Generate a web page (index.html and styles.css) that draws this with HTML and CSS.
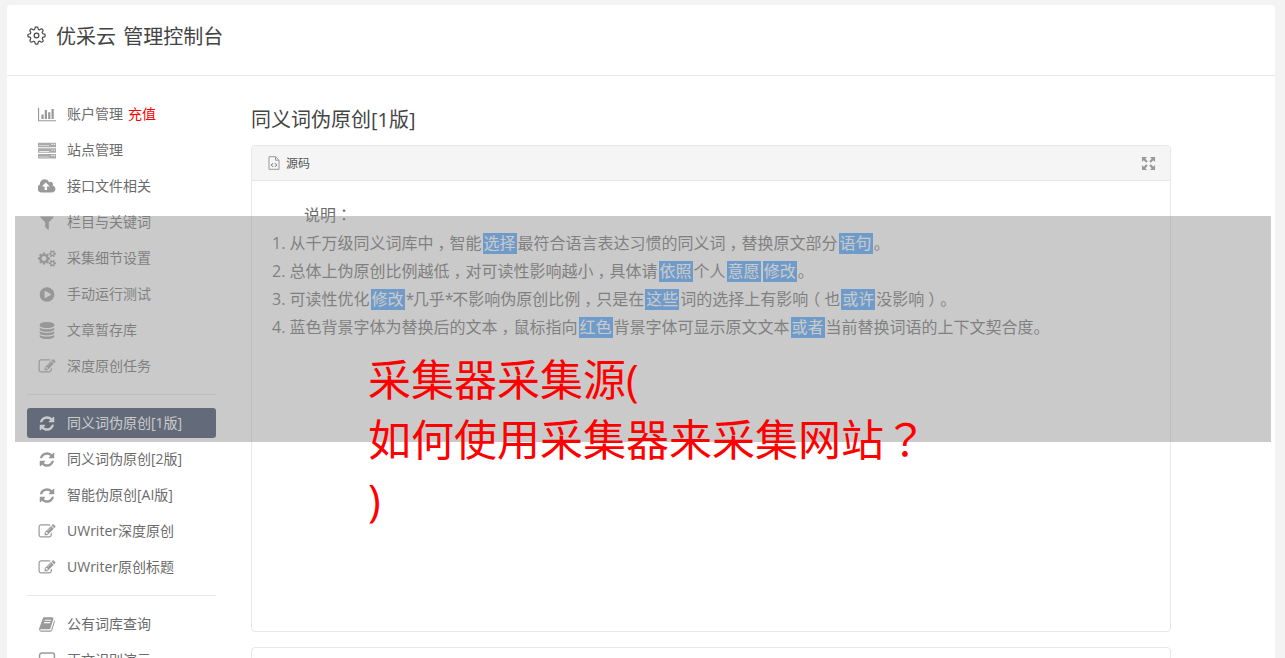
FILE: index.html
```html
<!DOCTYPE html>
<html lang="en">

<head>
	<meta charset="UTF-8">
	<title>优采云 管理控制台</title>
	<link rel="stylesheet" href="styles.css">
</head>

<body>
	<svg class="icon-defs" xmlns="http://www.w3.org/2000/svg">
		<symbol id="i-chart" viewBox="-128 128 2048 1536"><path d="M512 896v512h-256v-512h256zm384-512v1024h-256v-1024h256zm1024 1152v128h-2048v-1536h128v1408h1920zm-640-896v768h-256v-768h256zm384-384v1152h-256v-1152h256z"/></symbol>
		<symbol id="i-server" viewBox="0 0 16 14"><path fill="#aaaaaa" d="M0 0h16v4H0zM0 5h16v4H0zM0 10h16v4H0z"/><path fill="#fff" d="M12 1h1v1h-1zM14 1h1v1h-1zM12 6h1v1h-1zM14 6h1v1h-1zM12 11h1v1h-1zM14 11h1v1h-1zM1 2.500h9v.6H1zM1 7.500h9v.6H1zM1 12.500h9v.6H1z"/></symbol>
		<symbol id="i-cloud" viewBox="0 0 1920 1792"><path d="M1216 864q0-14-9-23l-352-352q-9-9-23-9t-23 9l-351 351q-10 12-10 24 0 14 9 23t23 9h224v352q0 13 9.500 22.500t22.500 9.500h192q13 0 22.500-9.500t9.500-22.500v-352h224q13 0 22.500-9.500t9.500-22.500zm640 288q0 159-112.500 271.500t-271.500 112.500h-1088q-185 0-316.500-131.500t-131.500-316.500q0-130 70-240t188-165q-2-30-2-43 0-212 150-362t362-150q156 0 285.500 87t188.500 231q71-62 166-62 106 0 181 75t75 181q0 76-41 138 130 31 213.500 135.500t83.500 238.500z"/></symbol>
		<symbol id="i-filter" viewBox="0 0 1792 1792"><path d="M1595 295q17 41-14 70l-493 493v742q0 42-39 59-13 5-25 5-27 0-45-19l-256-256q-19-19-19-45v-486l-493-493q-31-29-14-70 17-39 59-39h1280q42 0 59 39z"/></symbol>
		<symbol id="i-cogs" viewBox="0 0 1920 1792"><path d="M896 896q0-106-75-181t-181-75-181 75-75 181 75 181 181 75 181-75 75-181zm768 512q0-52-38-90t-90-38-90 38-38 90q0 53 37.500 90.500t90.500 37.500 90.500-37.500 37.500-90.500zm0-1024q0-52-38-90t-90-38-90 38-38 90q0 53 37.500 90.500t90.500 37.500 90.500-37.500 37.500-90.500zm-384 421v185q0 10-7 19.500t-16 10.500l-155 24q-11 35-32 76 34 48 90 115 7 11 7 20 0 12-7 19-23 30-82.500 89.500t-78.500 59.500q-11 0-21-7l-115-90q-37 19-77 31-11 108-23 155-7 24-30 24h-186q-11 0-20-7.500t-10-17.500l-23-153q-34-10-75-31l-118 89q-7 7-20 7-11 0-21-8-144-133-144-160 0-9 7-19 10-14 41-53t47-61q-23-44-35-82l-152-24q-10-1-17-9.500t-7-19.500v-185q0-10 7-19.500t16-10.500l155-24q11-35 32-76-34-48-90-115-7-11-7-20 0-12 7-20 22-30 82-89t79-59q11 0 21 7l115 90q34-18 77-32 11-108 23-154 7-24 30-24h186q11 0 20 7.500t10 17.500l23 153q34 10 75 31l118-89q8-7 20-7 11 0 21 8 144 133 144 160 0 8-7 19-12 16-42 54t-45 60q23 48 34 82l152 23q10 2 17 10.500t7 19.500zm640 533v140q0 16-149 31-12 27-30 52 51 113 51 138 0 4-4 7-122 71-124 71-8 0-46-47t-52-68q-20 2-30 2t-30-2q-14 21-52 68t-46 47q-2 0-124-71-4-3-4-7 0-25 51-138-18-25-30-52-149-15-149-31v-140q0-16 149-31 13-29 30-52-51-113-51-138 0-4 4-7 4-2 35-20t59-34 30-16q8 0 46 46.500t52 67.500q20-2 30-2t30 2q51-71 92-112l6-2q4 0 124 70 4 3 4 7 0 25-51 138 17 23 30 52 149 15 149 31zm0-1024v140q0 16-149 31-12 27-30 52 51 113 51 138 0 4-4 7-122 71-124 71-8 0-46-47t-52-68q-20 2-30 2t-30-2q-14 21-52 68t-46 47q-2 0-124-71-4-3-4-7 0-25 51-138-18-25-30-52-149-15-149-31v-140q0-16 149-31 13-29 30-52-51-113-51-138 0-4 4-7 4-2 35-20t59-34 30-16q8 0 46 46.500t52 67.500q20-2 30-2t30 2q51-71 92-112l6-2q4 0 124 70 4 3 4 7 0 25-51 138 17 23 30 52 149 15 149 31z"/></symbol>
		<symbol id="i-play" viewBox="0 0 1792 1792"><path d="M896 128q209 0 385.500 103t279.500 279.500 103 385.500-103 385.500-279.500 279.500-385.500 103-385.500-103-279.500-279.500-103-385.500 103-385.500 279.500-279.500 385.500-103zm384 823q32-18 32-55t-32-55l-544-320q-31-19-64-1-32 19-32 56v640q0 37 32 56 16 8 32 8 17 0 32-9z"/></symbol>
		<symbol id="i-database" viewBox="0 0 1792 1792"><path d="M896 768q237 0 443-43t325-127v170q0 69-103 128t-280 93.500-385 34.500-385-34.500-280-93.500-103-128v-170q119 84 325 127t443 43zm0 768q237 0 443-43t325-127v170q0 69-103 128t-280 93.500-385 34.500-385-34.500-280-93.500-103-128v-170q119 84 325 127t443 43zm0-384q237 0 443-43t325-127v170q0 69-103 128t-280 93.500-385 34.500-385-34.500-280-93.500-103-128v-170q119 84 325 127t443 43zm0-1152q208 0 385 34.500t280 93.500 103 128v128q0 69-103 128t-280 93.500-385 34.500-385-34.500-280-93.500-103-128v-128q0-69 103-128t280-93.500 385-34.500z"/></symbol>
		<symbol id="i-edit" viewBox="0 0 1792 1792"><path d="M888 1184l116-116-152-152-116 116v56h96v96h56zm440-720q-16-16-33 1l-350 350q-17 17-1 33t33-1l350-350q17-17 1-33zm80 594v190q0 119-84.500 203.500t-203.500 84.500h-832q-119 0-203.500-84.500t-84.500-203.500v-832q0-119 84.500-203.500t203.500-84.500h832q63 0 117 25 15 7 18 23 3 17-9 29l-49 49q-14 14-32 8-23-6-45-6h-832q-66 0-113 47t-47 113v832q0 66 47 113t113 47h832q66 0 113-47t47-113v-126q0-13 9-22l64-64q15-15 35-7t20 29zm-96-738l288 288-672 672h-288v-288zm444 132l-92 92-288-288 92-92q28-28 68-28t68 28l152 152q28 28 28 68t-28 68z"/></symbol>
		<symbol id="i-refresh" viewBox="0 0 1792 1792"><path d="M1639 1056q0 5-1 7-64 268-268 434.500t-478 166.500q-146 0-282.500-55t-243.500-157l-129 129q-19 19-45 19t-45-19-19-45v-448q0-26 19-45t45-19h448q26 0 45 19t19 45-19 45l-137 137q71 66 161 102t187 36q134 0 250-65t186-179q11-17 53-117 8-23 30-23h192q13 0 22.500 9.500t9.500 22.500zm25-800v448q0 26-19 45t-45 19h-448q-26 0-45-19t-19-45 19-45l138-138q-148-137-349-137-134 0-250 65t-186 179q-11 17-53 117-8 23-30 23h-199q-13 0-22.500-9.500t-9.500-22.500v-7q65-268 270-434.500t480-166.500q146 0 284 55.500t245 156.500l130-129q19-19 45-19t45 19 19 45z"/></symbol>
		<symbol id="i-book" viewBox="0 0 1792 1792"><path d="M1703 478q40 57 18 129l-275 906q-19 64-76.500 107.500t-122.500 43.500h-923q-77 0-148.500-53.500t-99.500-131.500q-24-67-2-127 0-4 3-27t4-37q1-8-3-21.500t-3-19.500q2-11 8-21t16.500-23.500 16.500-23.500q23-38 45-91.500t30-91.500q3-10 .5-30t-.5-28q3-11 17-28t17-23q21-36 42-92t25-90q1-9-2.500-32t.5-28q4-13 22-30.500t22-22.500q19-26 42.500-84.500t27.500-96.500q1-8-3-25.500t-2-26.500q2-8 9-18t18-23 17-21q8-12 16.500-30.500t15-35 16-36 19.500-32 26.500-23.500 36-11.500 47.500 5.500l-1 3q38-9 51-9h761q74 0 114 56t18 130l-274 906q-36 119-71.500 153.500t-128.500 34.500h-869q-27 0-38 15-11 16-1 43 24 70 144 70h923q29 0 56-15.500t35-41.500l300-987q7-22 5-57 38 15 59 43zm-1064 2q-4 13 2 22.500t20 9.500h608q13 0 25.500-9.500t16.500-22.500l21-64q4-13-2-22.500t-20-9.500h-608q-13 0-25.500 9.500t-16.500 22.500zm-83 256q-4 13 2 22.500t20 9.500h608q13 0 25.500-9.500t16.500-22.500l21-64q4-13-2-22.500t-20-9.500h-608q-13 0-25.500 9.500t-16.500 22.500z"/></symbol>
		<symbol id="i-square" viewBox="0 0 16 16"><rect x="1" y="1" width="14" height="14" rx="2" fill="none" stroke="currentColor" stroke-width="1.400"/></symbol>
	</svg>

	<div class="card">
		<div class="topbar">
			<svg class="gear" viewBox="0 0 24 24"><circle cx="12" cy="12" r="3"/><path d="M19.4 15a1.65 1.65 0 0 0 .33 1.82l.06.06a2 2 0 0 1 0 2.83 2 2 0 0 1-2.83 0l-.06-.06a1.65 1.65 0 0 0-1.82-.33 1.65 1.65 0 0 0-1 1.51V21a2 2 0 0 1-2 2 2 2 0 0 1-2-2v-.09A1.65 1.65 0 0 0 9 19.4a1.65 1.65 0 0 0-1.82.33l-.06.06a2 2 0 0 1-2.83 0 2 2 0 0 1 0-2.83l.06-.06a1.65 1.65 0 0 0 .33-1.82 1.65 1.65 0 0 0-1.51-1H3a2 2 0 0 1-2-2 2 2 0 0 1 2-2h.09A1.65 1.65 0 0 0 4.600 9a1.65 1.65 0 0 0-.33-1.82l-.06-.06a2 2 0 0 1 0-2.83 2 2 0 0 1 2.83 0l.06.06a1.65 1.65 0 0 0 1.82.33H9a1.65 1.65 0 0 0 1-1.51V3a2 2 0 0 1 2-2 2 2 0 0 1 2 2v.09a1.65 1.65 0 0 0 1 1.51 1.65 1.65 0 0 0 1.82-.33l.06-.06a2 2 0 0 1 2.83 0 2 2 0 0 1 0 2.83l-.06.06a1.65 1.65 0 0 0-.33 1.82V9a1.65 1.65 0 0 0 1.51 1H21a2 2 0 0 1 2 2 2 2 0 0 1-2 2h-.09a1.65 1.65 0 0 0-1.51 1z"/></svg>
			<span class="brand">优采云 管理控制台</span>
		</div>

		<div class="content">
			<div class="sidebar">
				<a class="nav-item"><svg class="nav-icon"><use href="#i-chart"/></svg>账户管理<span class="recharge">充值</span></a>
				<a class="nav-item"><svg class="nav-icon"><use href="#i-server"/></svg>站点管理</a>
				<a class="nav-item"><svg class="nav-icon"><use href="#i-cloud"/></svg>接口文件相关</a>
				<a class="nav-item"><svg class="nav-icon"><use href="#i-filter"/></svg>栏目与关键词</a>
				<a class="nav-item"><svg class="nav-icon"><use href="#i-cogs"/></svg>采集细节设置</a>
				<a class="nav-item"><svg class="nav-icon"><use href="#i-play"/></svg>手动运行测试</a>
				<a class="nav-item"><svg class="nav-icon"><use href="#i-database"/></svg>文章暂存库</a>
				<a class="nav-item"><svg class="nav-icon"><use href="#i-edit"/></svg>深度原创任务</a>
				<div class="nav-divider"></div>
				<a class="nav-item active"><svg class="nav-icon"><use href="#i-refresh"/></svg>同义词伪原创[1版]</a>
				<a class="nav-item"><svg class="nav-icon"><use href="#i-refresh"/></svg>同义词伪原创[2版]</a>
				<a class="nav-item"><svg class="nav-icon"><use href="#i-refresh"/></svg>智能伪原创[AI版]</a>
				<a class="nav-item"><svg class="nav-icon"><use href="#i-edit"/></svg>UWriter深度原创</a>
				<a class="nav-item"><svg class="nav-icon"><use href="#i-edit"/></svg>UWriter原创标题</a>
				<div class="nav-divider"></div>
				<a class="nav-item"><svg class="nav-icon"><use href="#i-book"/></svg>公有词库查询</a>
				<a class="nav-item"><svg class="nav-icon"><use href="#i-square"/></svg>正文识别演示</a>
			</div>

			<div class="main">
				<h3 class="page-title">同义词伪原创[1版]</h3>
				<div class="panel">
					<div class="panel-head">
						<span class="panel-name">
							<svg class="file-icon" viewBox="0 0 12 14"><path class="file-line" d="M1 .7h6.500L11 4.200v9.100H1z"/><path class="file-line" d="M7.500.7v3.500H11"/><path class="file-code" d="M5 7.200 3.300 9 5 10.800M7 7.200 8.700 9 7 10.800"/></svg>
							源码
						</span>
						<svg class="expand-icon" viewBox="0 0 16 16"><path d="M1 1h5.500L4.600 2.900 7.200 5.500 5.500 7.200 2.900 4.600 1 6.500z"/><path d="M15 1H9.500l1.900 1.900-2.600 2.600 1.700 1.700 2.600-2.600L15 6.500z"/><path d="M1 15h5.500l-1.900-1.900 2.600-2.600-1.700-1.700-2.600 2.600L1 9.500z"/><path d="M15 15H9.500l1.900-1.900-2.600-2.600 1.700-1.700 2.600 2.600L15 9.500z"/></svg>
					</div>
					<div class="panel-body">
						<p class="intro">说明<span class="punct">：</span></p>
						<p>1. 从千万级同义词库中<span class="half">，</span>智能<span class="syn">选择</span>最符合语言表达习惯的同义词<span class="half">，</span>替换原文部分<span class="syn">语句</span>。</p>
						<p>2. 总体上伪原创比例越低<span class="half">，</span>对可读性影响越小<span class="half">，</span>具体请<span class="syn">依照</span>个人<span class="syn">意愿</span><span class="syn">修改</span>。</p>
						<p>3. 可读性优化<span class="syn">修改</span><span class="star">*</span>几乎<span class="star">*</span>不影响伪原创比例<span class="half">，</span>只是在<span class="syn">这些</span>词的选择上有影响<span class="half">（</span>也<span class="syn">或许</span>没影响<span class="half">）</span>。</p>
						<p>4. 蓝色背景字体为替换后的文本<span class="half">，</span>鼠标指向<span class="syn">红色</span>背景字体可显示原文文本<span class="syn">或者</span>当前替换词语的上下文契合度。</p>
					</div>
				</div>
				<div class="panel panel-next"></div>
			</div>
		</div>
	</div>

	<div class="banner">
		<div class="banner-title">采集器采集源(<br>如何使用采集器来采集网站<span class="punct">？</span><br>)</div>
	</div>
</body>

</html>
```

FILE: styles.css
```css
html,
body
{
	height: 100%;
}

body
{
	margin: 0;
	overflow: hidden;
	background-color: #f3f3f3;
	color: #6b6b6b;
	font-family: 'Open Sans', 'Noto Sans CJK SC', sans-serif;
	font-size: 14px;
}

.icon-defs
{
	display: none;
}

/* centred full-width punctuation */
.punct
{
	font-family: 'Noto Sans CJK TC', sans-serif;
	line-height: 0;
}

/* half-width form, padded back out to a full cell so the mark sits in the middle */
.half
{
	padding: 0 0.25em;
	font-feature-settings: "halt";
}

.card
{
	margin: 5px 10px 0 7px;
	height: 700px;
	background-color: #ffffff;
	border-radius: 4px;
}

.topbar
{
	display: flex;
	align-items: center;
	height: 60px;
	padding: 0 0 10px 20px;
	border-bottom: 1px solid #e7e7e7;
}

.gear
{
	width: 19px;
	height: 19px;
	margin-right: 10px;
	fill: none;
	stroke: #444444;
	stroke-width: 1.5;
}

.brand
{
	font-size: 20px;
	word-spacing: 2px;
	color: #444444;
}

.content
{
	display: flex;
	gap: 35px;
	padding: 23px 0 0 20px;
}

.sidebar
{
	width: 189px;
	flex-shrink: 0;
}

.nav-item
{
	display: flex;
	align-items: center;
	height: 30px;
	margin-bottom: 6px;
	padding-left: 11px;
	border-radius: 3px;
	line-height: 30px;
}

.nav-item.active
{
	background-color: #304060;
	color: #ffffff;
}

.nav-icon
{
	width: 18px;
	height: 17px;
	margin-right: 11px;
	flex-shrink: 0;
	fill: #999999;
	color: #999999;
}

.active .nav-icon
{
	fill: #ffffff;
}

.recharge
{
	margin-left: 5px;
	color: #ff0000;
}

.nav-divider
{
	height: 1px;
	margin: 13px 0;
	background-color: #e7e7e7;
}

.main
{
	width: 920px;
}

.page-title
{
	height: 30px;
	margin: 6px 0 10px;
	font-size: 20px;
	font-weight: normal;
	line-height: 30px;
	color: #444444;
}

.panel
{
	height: 485px;
	border: 1px solid #e7e7e7;
	border-radius: 4px;
}

.panel-next
{
	margin-top: 15px;
}

.panel-head
{
	display: flex;
	align-items: center;
	justify-content: space-between;
	height: 34px;
	padding: 0 14px 0 16px;
	background-color: #f5f5f5;
	border-bottom: 1px solid #e7e7e7;
	border-radius: 4px 4px 0 0;
}

.panel-name
{
	display: flex;
	align-items: center;
	gap: 6px;
	font-size: 12px;
	color: #555555;
}

.file-icon
{
	width: 12px;
	height: 14px;
}

.file-line
{
	fill: none;
	stroke: #999999;
	stroke-width: 1;
}

.file-code
{
	fill: none;
	stroke: #666666;
	stroke-width: 1;
}

.expand-icon
{
	width: 15px;
	height: 15px;
	fill: #999999;
}

.panel-body
{
	padding: 20px 0 0 20px;
	font-size: 16px;
	line-height: 28px;
}

.panel-body p
{
	margin: 0;
}

.panel-body .intro
{
	text-indent: 32px;
}

.star
{
	letter-spacing: -1.5px;
}

.syn
{
	display: inline-block;
	margin: 0 1px;
	padding: 0 1px;
	background-color: #48a0ff;
	color: #ffffff;
	line-height: 21px;
}

.banner
{
	position: absolute;
	top: 216px;
	left: 15px;
	width: 1256px;
	height: 226px;
	background-color: rgba(150, 150, 150, 0.5);
}

.banner-title
{
	padding: 134px 0 0 353px;
	font-size: 43px;
	line-height: 60px;
	color: #ff0000;
}
```
